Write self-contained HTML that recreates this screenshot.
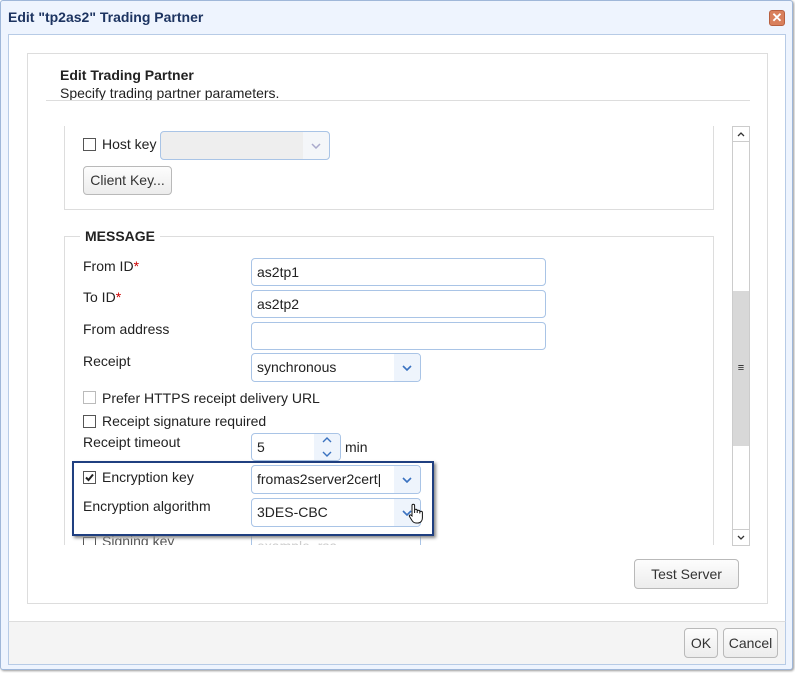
<!DOCTYPE html><html><head><style>
*{box-sizing:border-box}body{margin:0;width:795px;height:673px;background:#fff;font-family:"Liberation Sans",sans-serif;font-size:14px;color:#222;position:relative;overflow:hidden}
.a{position:absolute}
.inp{position:absolute;border:1px solid #a9c4e6;border-radius:4px;background:#fff;padding:0 5px;line-height:26px;height:28px}
.dd{position:absolute;right:0;top:0;width:26px;height:100%;background:#eef4fc;border-radius:0 4px 4px 0}
.dd svg{position:absolute;left:8px;top:50%;margin-top:-3px}
.cb{position:absolute;width:13px;height:13px;border:1px solid #555;background:#fff}
.btn{position:absolute;border:1px solid #b9b9b9;border-radius:4px;background:linear-gradient(#fdfdfd,#ececec);text-align:center;color:#333}
</style></head><body>
<div class="a" style="left:0;top:0;width:793px;height:670px;background:#eef4fe;border:1px solid #9fb7d9;border-radius:3px;box-shadow:1px 1px 2px #999"></div>
<div class="a" style="left:8px;top:9px;font-weight:bold;font-size:14px;color:#1d3461">Edit "tp2as2" Trading Partner</div>
<div class="a" style="left:769px;top:10px;width:16px;height:16px;background:#d9805c;border:1px solid #b86040;border-radius:3px;color:#fff;font-size:13px;line-height:13px;text-align:center;font-weight:bold">✕</div>
<div class="a" style="left:8px;top:34px;width:778px;height:588px;background:#fff;border:1px solid #b7cbe6;border-bottom:none"></div>
<div class="a" style="left:8px;top:621px;width:778px;height:44px;background:#f4f4f4;border:1px solid #b7cbe6;border-top:1px solid #ddd"></div>
<div class="a" style="left:27px;top:53px;width:741px;height:551px;border:1px solid #ddd"></div>
<div class="a" style="left:60px;top:67px;font-weight:bold">Edit Trading Partner</div>
<div class="a" style="left:60px;top:85px">Specify trading partner parameters.</div>
<div class="a" style="left:46px;top:100px;width:704px;height:1px;background:#ddd"></div>
<div class="a" style="left:64px;top:126px;width:650px;height:84px;border:1px solid #ddd;border-top:none"></div>
<div class="cb" style="left:83px;top:138px"></div><div class="a" style="left:102px;top:136px">Host key</div>
<div class="inp" style="left:160px;top:131px;width:170px;height:29px;background:#eee"><div class="dd" style="background:#f4f6f9"><svg width="10" height="6"><path d="M1 1L5 5L9 1" stroke="#aac" stroke-width="1.5" fill="none"/></svg></div></div>
<div class="btn" style="left:83px;top:166px;width:89px;height:29px;line-height:27px">Client Key...</div>
<div class="a" style="left:64px;top:236px;width:650px;height:310px;border:1px solid #ddd;border-bottom:none"></div>
<div class="a" style="left:80px;top:228px;background:#fff;padding:0 5px;font-weight:bold">MESSAGE</div>
<div class="a" style="left:83px;top:258px">From ID<span style="color:#c00">*</span></div>
<div class="inp" style="left:251px;top:258px;width:295px">as2tp1</div>
<div class="a" style="left:83px;top:289px">To ID<span style="color:#c00">*</span></div>
<div class="inp" style="left:251px;top:290px;width:295px">as2tp2</div>
<div class="a" style="left:83px;top:321px">From address</div>
<div class="inp" style="left:251px;top:322px;width:295px"></div>
<div class="a" style="left:83px;top:353px">Receipt</div>
<div class="inp" style="left:251px;top:353px;width:170px;height:29px">synchronous<div class="dd"><svg width="10" height="6"><path d="M1 1L5 5L9 1" stroke="#3a72c0" stroke-width="1.6" fill="none"/></svg></div></div>
<div class="cb" style="left:83px;top:391px;border-color:#bbb"></div><div class="a" style="left:102px;top:390px">Prefer HTTPS receipt delivery URL</div>
<div class="cb" style="left:83px;top:415px"></div><div class="a" style="left:102px;top:413px">Receipt signature required</div>
<div class="a" style="left:83px;top:434px">Receipt timeout</div>
<div class="inp" style="left:251px;top:433px;width:90px">5<div class="dd"><svg width="10" height="22" style="margin-top:-11px"><path d="M1 6L5 2L9 6M1 16L5 20L9 16" stroke="#3a72c0" stroke-width="1.4" fill="none"/></svg></div></div>
<div class="a" style="left:345px;top:439px">min</div>
<div class="cb" style="left:83px;top:537px"></div>
<div class="a" style="left:102px;top:533px;color:#555">Signing key</div>
<div class="inp" style="left:251px;top:532px;width:170px;color:#ccc">example_rsa</div>
<div class="a" style="left:64px;top:545px;width:670px;height:20px;background:#fff"></div>
<div class="a" style="left:72px;top:461px;width:362px;height:75px;border:2px solid #1f3f80;background:#fff;box-shadow:2px 2px 3px #888"></div>
<div class="a" style="left:83px;top:471px;width:13px;height:13px;border:1px solid #555"><svg width="11" height="11" style="position:absolute;left:0;top:0"><path d="M2 5.5L4.5 8L9 2.5" stroke="#222" stroke-width="2" fill="none"/></svg></div>
<div class="a" style="left:102px;top:469px">Encryption key</div>
<div class="inp" style="left:251px;top:465px;width:170px;height:29px">fromas2server2cert|<div class="dd"><svg width="10" height="6"><path d="M1 1L5 5L9 1" stroke="#3a72c0" stroke-width="1.6" fill="none"/></svg></div></div>
<div class="a" style="left:83px;top:498px">Encryption algorithm</div>
<div class="inp" style="left:251px;top:498px;width:170px;height:29px">3DES-CBC<div class="dd"><svg width="10" height="6"><path d="M1 1L5 5L9 1" stroke="#3a72c0" stroke-width="1.6" fill="none"/></svg></div></div>
<svg class="a" style="left:408px;top:503px" width="16" height="22" viewBox="0 0 16 22"><path d="M4 13V2.5a1.3 1.3 0 0 1 2.6 0V10V7.5a1.3 1.3 0 0 1 2.6 0V10V8.5a1.3 1.3 0 0 1 2.6 0V10.5V9.5a1.3 1.3 0 0 1 2.6 0V15c0 3-2 5-4.5 5H8c-2 0-3-1-4-2.5L1.5 13.5c-.7-1.2.8-2.2 1.6-1.2z" fill="#fff" stroke="#111" stroke-width="1"/></svg>
<div class="a" style="left:732px;top:126px;width:18px;height:420px;border:1px solid #ccc;background:#fff"></div>
<div class="a" style="left:732px;top:126px;width:18px;height:16px;border:1px solid #ccc"><svg width="16" height="14" style="position:absolute;left:0;top:0"><path d="M5 9L8 6L11 9" stroke="#333" stroke-width="1.3" fill="none"/></svg></div>
<div class="a" style="left:732px;top:529px;width:18px;height:17px;border:1px solid #ccc"><svg width="16" height="15" style="position:absolute;left:0;top:0"><path d="M5 6L8 9L11 6" stroke="#333" stroke-width="1.3" fill="none"/></svg></div>
<div class="a" style="left:733px;top:291px;width:16px;height:155px;background:#d8d8d8;text-align:center;line-height:155px;font-size:11px">≡</div>
<div class="btn" style="left:634px;top:559px;width:105px;height:30px;line-height:28px">Test Server</div>
<div class="btn" style="left:684px;top:628px;width:34px;height:30px;line-height:28px">OK</div>
<div class="btn" style="left:723px;top:628px;width:55px;height:30px;line-height:28px">Cancel</div>
</body></html>
